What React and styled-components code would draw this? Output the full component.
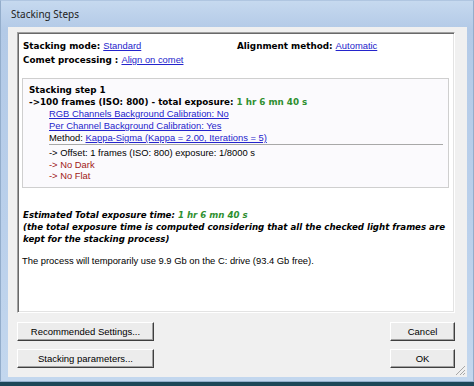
import React from 'react';
import styled, { createGlobalStyle } from 'styled-components';

const GlobalStyle = createGlobalStyle`
  html, body {
    margin: 0;
    padding: 0;
    background: #1d4657;
  }
  body {
    width: 474px;
    height: 386px;
    overflow: hidden;
  }
`;

const Window = styled.div`
  width: 474px;
  height: 382px;
  box-sizing: border-box;
  display: flex;
  flex-direction: column;
  background: linear-gradient(to bottom, #c6d9ef 0, #b3cae7 28px, #bad0eb 60%, #c3d7ee 100%);
  border: 1px solid #93adcb;
  border-top-color: #b0c6e1;
`;

const TitleBar = styled.div`
  height: 26px;
  flex: none;
  display: flex;
  align-items: center;
  padding-left: 10px;
  font-family: "Noto Sans", "Open Sans", sans-serif;
  font-size: 10px;
  color: #222;
`;

const Client = styled.div`
  position: relative;
  flex: 1;
  margin: 0 6px 4px 7px;
  background: #f0f0f0;
  padding: 5px 12px 0 9px;
  display: flex;
  flex-direction: column;
  font-family: "Liberation Sans", Arial, sans-serif;
  font-size: 9.4px;
  color: #000;
`;

const Panel = styled.div`
  height: 281px;
  box-sizing: border-box;
  background: #fff;
  border: 1px solid;
  border-color: #a0a0a0 #ffffff #ffffff #a0a0a0;
  box-shadow: inset 1px 1px 0 #696969, inset -1px -1px 0 #e3e3e3;
  padding: 1px;
`;

const Header = styled.div`
  display: grid;
  grid-template-columns: 214px 1fr;
  padding: 5px 4px 0 4px;
  line-height: 13px;
`;

const Label = styled.span`
  font-family: "DejaVu Sans", Verdana, sans-serif;
  font-weight: bold;
  font-size: 8.8px;
`;

const Link = styled.span`
  color: #2424cc;
  text-decoration: underline;
`;

const StepBox = styled.div`
  margin: 11px 4px 0 3px;
  border: 1px solid #cfcfcf;
  background: #fbfafd;
  padding: 5px 4px 5px 6px;
  line-height: 12px;
`;

const StepTitle = styled.div`
  font-family: "DejaVu Sans", Verdana, sans-serif;
  font-weight: bold;
  font-size: 8.75px;
`;

const Green = styled.span`
  color: #2f8f2f;
`;

const Indented = styled.div`
  padding-left: 20px;
`;

const Separator = styled.div`
  height: 1px;
  background: #a8a8a8;
  margin: 0 1px 2px 20px;
`;

const Dark = styled.div`
  padding-left: 20px;
  line-height: 11.5px;
  color: ${p => (p.$red ? '#a01818' : '#000')};
`;

const Estimate = styled.div`
  margin: 21px 4px 0 4px;
  font-family: "DejaVu Sans", Verdana, sans-serif;
  font-weight: bold;
  font-style: italic;
  font-size: 8.65px;
  line-height: 12px;
  white-space: nowrap;
`;

const Note = styled.div`
  margin: 10px 4px 0 3px;
  line-height: 12px;
`;

const ButtonRow = styled.div`
  display: flex;
  justify-content: space-between;
  margin-top: 9px;
`;

const ButtonColumn = styled.div`
  display: flex;
  flex-direction: column;
  gap: 8px;
`;

const Button = styled.button`
  width: ${p => p.$w}px;
  height: 19px;
  box-sizing: border-box;
  padding: 0;
  background: #ececec;
  border: 1px solid;
  border-color: #ffffff #3f3f3f #3f3f3f #ffffff;
  box-shadow: inset -1px -1px 0 #a0a0a0;
  font-family: "Liberation Sans", Arial, sans-serif;
  font-size: 9.5px;
  color: #000;
  text-align: center;
`;

const Grip = styled.svg`
  position: absolute;
  right: 1px;
  bottom: 1px;
`;

export default function App() {
  return (
    <>
      <GlobalStyle />
      <Window>
        <TitleBar>Stacking Steps</TitleBar>
        <Client>
          <Panel>
            <Header>
              <div>
                <Label>Stacking mode: </Label>
                <Link>Standard</Link>
              </div>
              <div>
                <Label>Alignment method: </Label>
                <Link>Automatic</Link>
              </div>
              <div>
                <Label>Comet processing : </Label>
                <Link>Align on comet</Link>
              </div>
            </Header>

            <StepBox>
              <StepTitle>Stacking step 1</StepTitle>
              <StepTitle>
                -&gt;100 frames (ISO: 800) - total exposure: <Green>1 hr 6 mn 40 s</Green>
              </StepTitle>
              <Indented>
                <Link>RGB Channels Background Calibration: No</Link>
              </Indented>
              <Indented>
                <Link>Per Channel Background Calibration: Yes</Link>
              </Indented>
              <Indented>
                Method: <Link>Kappa-Sigma (Kappa = 2.00, Iterations = 5)</Link>
              </Indented>
              <Separator />
              <Dark>-&gt; Offset: 1 frames (ISO: 800) exposure: 1/8000 s</Dark>
              <Dark $red>-&gt; No Dark</Dark>
              <Dark $red>-&gt; No Flat</Dark>
            </StepBox>

            <Estimate>
              Estimated Total exposure time: <Green>1 hr 6 mn 40 s</Green>
              <br />
              (the total exposure time is computed considering that all the checked light frames are
              <br />
              kept for the stacking process)
            </Estimate>

            <Note>The process will temporarily use 9.9 Gb on the C: drive (93.4 Gb free).</Note>
          </Panel>

          <ButtonRow>
            <ButtonColumn>
              <Button $w={137}>Recommended Settings...</Button>
              <Button $w={137}>Stacking parameters...</Button>
            </ButtonColumn>
            <ButtonColumn>
              <Button $w={65}>Cancel</Button>
              <Button $w={65}>OK</Button>
            </ButtonColumn>
          </ButtonRow>

          <Grip width="12" height="12" viewBox="0 0 12 12">
            <g stroke="#a7a7a7" strokeWidth="1">
              <line x1="11" y1="2" x2="2" y2="11" />
              <line x1="11" y1="6" x2="6" y2="11" />
              <line x1="11" y1="9" x2="9" y2="11" />
            </g>
          </Grip>
        </Client>
      </Window>
    </>
  );
}
